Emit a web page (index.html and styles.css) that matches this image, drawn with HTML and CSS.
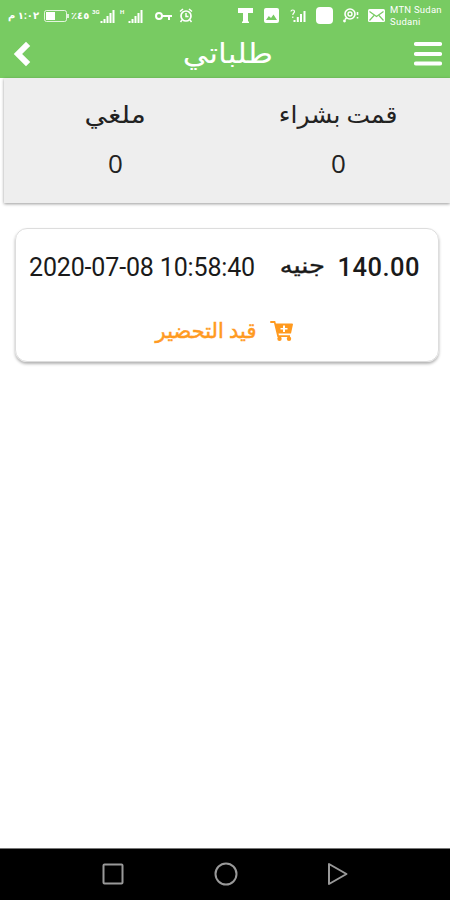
FILE: index.html
```
<!DOCTYPE html>
<html lang="ar">
<head>
  <meta charset="UTF-8" />
  <meta name="viewport" content="width=device-width, initial-scale=1.0"/>
  <title>طلباتي</title>
  <link rel="stylesheet" href="styles.css">
</head>
<body>

<div class="statusbar">
  <span class="clock" dir="rtl">١:٠٢ م</span>
  <svg class="battery" width="25" height="12" viewBox="0 0 25 12"><rect x=".5" y=".5" width="22" height="11" rx="2" fill="none" stroke="#fff" opacity=".8"/><rect x="2" y="2" width="9" height="8" fill="#fff"/><path d="M24 4v4" stroke="#fff" stroke-width="1.5"/></svg>
  <span class="percent">٪٤٥</span>
  <span class="net">3G</span>
  <svg class="signal" width="15" height="14" viewBox="0 0 15 14"><path d="M1.5 14v-2M4.5 14v-4M7.5 14V7M10.5 14V4M13.5 14V1" stroke="#fff" stroke-width="2"/></svg>
  <span class="net second">H</span>
  <svg class="signal" width="15" height="14" viewBox="0 0 15 14"><path d="M1.5 14v-2M4.5 14v-4M7.5 14V7M10.5 14V4M13.5 14V1" stroke="#fff" stroke-width="2"/></svg>
  <svg class="key" width="18" height="10" viewBox="0 0 18 10"><circle cx="4" cy="5" r="3" fill="none" stroke="#fff" stroke-width="2"/><path d="M7 5h10M14 5v4" fill="none" stroke="#fff" stroke-width="2"/></svg>
  <svg class="alarm" width="14" height="15" viewBox="0 0 14 15"><circle cx="7" cy="8" r="5" fill="none" stroke="#fff" stroke-width="1.7"/><path d="M7 5v3.5h2.5M1 3.5L4 1M13 3.5L10 1M3 12l-1.5 2M11 12l1.5 2" fill="none" stroke="#fff" stroke-width="1.5"/></svg>
  <svg class="tee" width="15" height="15" viewBox="0 0 15 15"><path d="M0 0h15v5h-5v8.500h1V15H4v-1.500h1V5H0z" fill="#fff"/></svg>
  <svg class="photo" width="15" height="15" viewBox="0 0 15 15"><path fill-rule="evenodd" d="M2 0h11a2 2 0 0 1 2 2v11a2 2 0 0 1-2 2H2a2 2 0 0 1-2-2V2a2 2 0 0 1 2-2zM2 12h11L9.500 6.500 7 10 4.800 8z" fill="#fff"/></svg>
  <svg class="nosim" width="16" height="14" viewBox="0 0 16 14"><path d="M4.500 13v-2M7.800 13V8M11 13V5M14.500 13V2" stroke="#fff" stroke-width="2"/><path d="M1 2.500C1 .5 4.500.5 4.500 2.500 4.500 4 2.800 4 2.800 6M2.800 7.500v1.500" fill="none" stroke="#fff" stroke-width="1.200"/></svg>
  <span class="square"></span>
  <svg class="search" width="16" height="15" viewBox="0 0 16 15"><circle cx="7" cy="6" r="5" fill="none" stroke="#fff" stroke-width="1.600"/><circle cx="7" cy="6" r="2" fill="none" stroke="#fff" stroke-width="1.400"/><path d="M3.500 10L2 11.500M14.500 4v3M14.500 9v1.500" stroke="#fff" stroke-width="1.600"/><circle cx="1.500" cy="13" r="1.400" fill="#fff"/></svg>
  <svg class="mail" width="17" height="13" viewBox="0 0 17 13"><rect width="17" height="13" rx="1.500" fill="#fff"/><path d="M1.500 2.500l7 5 7-5M1.500 11.500l4.500-5M15.500 11.500L11 6.500" fill="none" stroke="#78cb62" stroke-width="1.200"/></svg>
  <div class="carrier">MTN Sudan<br>Sudani</div>
</div>

<header class="navbar">
  <svg width="18" height="26" viewBox="0 0 18 26"><path d="M13 5L5 13l8 8" fill="none" stroke="#fff" stroke-width="6" stroke-linecap="square"/></svg>
  <h1 dir="rtl">طلباتي</h1>
  <svg width="28" height="26" viewBox="0 0 28 26"><path d="M2 3h24M2 13h24M2 22.500h24" stroke="#fff" stroke-width="4.200" stroke-linecap="round"/></svg>
</header>

<section class="summary" dir="rtl">
  <div class="stat">
    <span class="label bought">قمت بشراء</span>
    <span class="count">0</span>
  </div>
  <div class="stat">
    <span class="label cancelled">ملغي</span>
    <span class="count">0</span>
  </div>
</section>

<main>
  <div class="order">
    <div class="order-row">
      <span class="date">2020-07-08 10:58:40</span>
      <span class="currency" dir="rtl">جنيه</span>
      <span class="price">140.00</span>
    </div>
    <div class="order-status">
      <span class="status-text" dir="rtl">قيد التحضير</span>
      <svg width="23" height="20" viewBox="0 0 23 20"><path fill-rule="evenodd" d="M1 0h4.200l.7 2.500H22a1 1 0 0 1 .9 1.300L21 12.500H8.500l.4 1.800H20V16H7.400L4 2H1a1 1 0 0 1 0-2zM13 4.500V7h-2.500v1.500H13V11h2V8.500h2.500V7H15V4.500z" fill="#ff9a1f"/><circle cx="9.500" cy="17.800" r="2.200" fill="#ff9a1f"/><circle cx="19" cy="17.800" r="2.200" fill="#ff9a1f"/></svg>
    </div>
  </div>
</main>

<footer class="softkeys">
  <svg width="22" height="22" viewBox="0 0 22 22"><rect x="1.500" y="1.500" width="19" height="19" rx="1"/></svg>
  <svg width="24" height="24" viewBox="0 0 24 24"><circle cx="12" cy="12" r="10.500"/></svg>
  <svg width="22" height="24" viewBox="0 0 22 24"><path d="M2 2v20l17.500-10z" stroke-linejoin="round"/></svg>
</footer>

</body>
</html>
```
FILE: styles.css
```
* {
  box-sizing: border-box;
}

body {
  margin: 0;
  height: 900px;
  display: flex;
  flex-direction: column;
  overflow: hidden;
  background: #fff;
  font-family: Roboto, "DejaVu Sans", sans-serif;
  color: #222;
}

svg {
  display: block;
  flex: none;
}

.statusbar {
  height: 31px;
  padding-left: 11px;
  display: flex;
  align-items: center;
  background: #78cb62;
  color: #fff;
  white-space: nowrap;
}

.statusbar > * {
  flex: none;
}

.clock {
  width: 28px;
  font-size: 10px;
  font-weight: bold;
}

.battery {
  margin-left: 5px;
}

.percent {
  width: 20px;
  margin-left: 2px;
  font-size: 10px;
  font-weight: bold;
}

.net {
  width: 8px;
  margin: 0 0 8px 1px;
  font-size: 6px;
  font-weight: bold;
}

.net.second {
  margin-left: 5px;
}

.key {
  margin-left: 12px;
}

.alarm {
  margin-left: 6px;
}

.tee {
  margin-left: 45px;
}

.photo {
  margin-left: 11px;
}

.nosim {
  margin-left: 11px;
}

.square {
  width: 17px;
  height: 17px;
  margin-left: 10px;
  border-radius: 4px;
  background: #fff;
}

.search {
  margin-left: 10px;
}

.mail {
  margin-left: 9px;
}

.carrier {
  margin-left: 5px;
  font-size: 9.5px;
  line-height: 12px;
  letter-spacing: 0.25px;
}

.navbar {
  height: 47px;
  padding: 0 8px 2px 13px;
  display: flex;
  align-items: center;
  justify-content: space-between;
  background: #78cb62;
}

.navbar h1 {
  margin: 0 0 0 10px;
  color: #fff;
  font-size: 28px;
  font-weight: normal;
  transform: scaleX(1.13);
}

.summary {
  height: 125px;
  margin-left: 4px;
  padding-top: 20px;
  display: flex;
  background: #eee;
  box-shadow: 0 1px 3px rgba(0, 0, 0, 0.4);
}

.stat {
  flex: 1;
  display: flex;
  flex-direction: column;
  align-items: center;
}

.label {
  height: 34px;
  font-size: 24px;
  line-height: 34px;
}

.bought {
  transform: scaleX(1.04);
}

.cancelled {
  transform: scaleX(1.17);
}

.count {
  margin-top: 14px;
  font-family: "Open Sans", sans-serif;
  font-size: 26px;
  line-height: 34px;
}

main {
  flex: 1;
  padding: 25px 11px 0 15px;
}

.order {
  height: 134px;
  padding-top: 20px;
  border: 1px solid #ddd;
  border-radius: 12px;
  box-shadow: 0 2px 3px rgba(0, 0, 0, 0.3);
}

.order-row {
  height: 36px;
  padding: 0 18px 0 13px;
  display: flex;
  align-items: center;
  color: #1a1a1a;
}

.date {
  font-size: 25px;
  letter-spacing: -0.15px;
}

.currency {
  margin: -4px 0 0 auto;
  font-size: 22px;
  transform: scaleX(1.17);
  -webkit-text-stroke: 0.4px;
}

.price {
  margin-left: 16px;
  font-size: 25.5px;
  font-weight: 500;
  letter-spacing: 0.5px;
}

.order-status {
  margin-top: 28px;
  height: 36px;
  padding-right: 5px;
  display: flex;
  align-items: center;
  justify-content: center;
  gap: 14px;
  color: #ff9a1f;
}

.status-text {
  font-size: 21px;
  -webkit-text-stroke: 0.5px;
}

.softkeys {
  height: 52px;
  padding: 0 101px 2px 102px;
  border-top: 1px solid #777;
  display: flex;
  align-items: center;
  justify-content: space-between;
  background: #000;
}

.softkeys svg {
  fill: none;
  stroke: #999;
  stroke-width: 2;
}
```
